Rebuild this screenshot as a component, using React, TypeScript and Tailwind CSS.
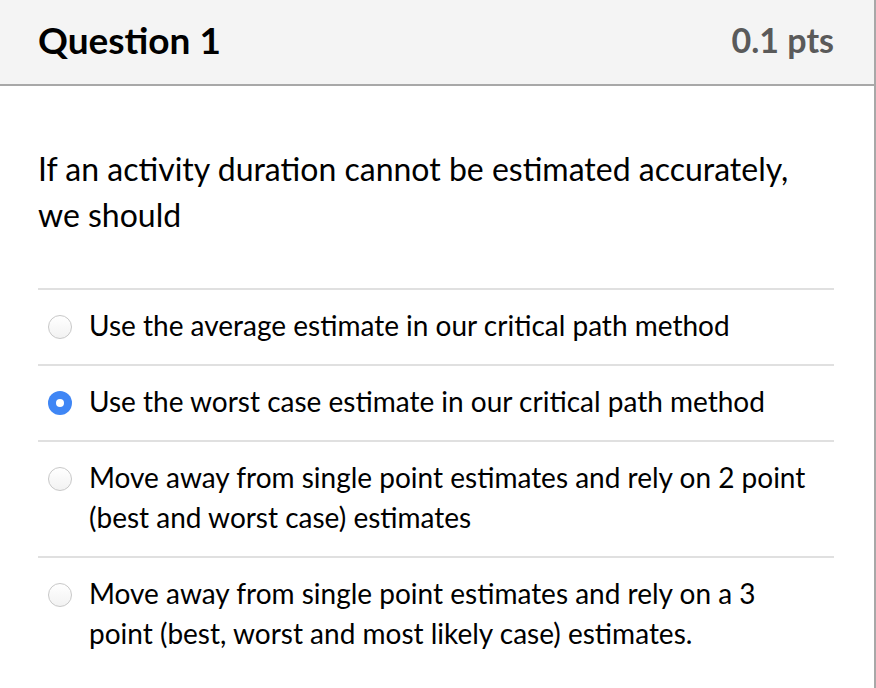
const answers = [
  { id: "a", text: "Use the average estimate in our critical path method", checked: false },
  { id: "b", text: "Use the worst case estimate in our critical path method", checked: true },
  {
    id: "c",
    text: "Move away from single point estimates and rely on 2 point (best and worst case) estimates",
    checked: false,
  },
  {
    id: "d",
    text: "Move away from single point estimates and rely on a 3 point (best, worst and most likely case) estimates.",
    checked: false,
  },
];

function Radio({ checked }: { checked: boolean }) {
  if (checked) {
    return (
      <span className="flex h-6 w-6 shrink-0 items-center justify-center rounded-full bg-[#3f86f5]">
        <span className="h-2 w-2 rounded-full bg-white" />
      </span>
    );
  }
  return (
    <span className="h-6 w-6 shrink-0 rounded-full border border-[#c8c8c8] bg-gradient-to-b from-white to-[#f2f2f2]" />
  );
}

export default function App() {
  return (
    <main
      className="min-h-[688px] w-[876px] bg-white border-r-2 border-[#a8a8a8] text-black"
      style={{ fontFamily: "Lato, 'Open Sans', sans-serif" }}
    >
      <header className="flex h-[86px] items-center justify-between border-b-2 border-[#a8a8a8] bg-[#f4f4f4] pb-[5px] pl-[38px] pr-[40px]">
        <h2 className="text-[37px] font-bold leading-none">Question 1</h2>
        <span className="text-[34px] font-bold leading-none text-[#5a5a5a]">0.1 pts</span>
      </header>

      <section className="pl-[38px] pr-[40px]">
        <p className="pt-[60px] pb-[50px] text-[32px] leading-[46px]">
          If an activity duration cannot be estimated accurately, we should
        </p>
        <div>
          {answers.map((a) => (
            <label
              key={a.id}
              className="flex items-start gap-[17px] border-t-2 border-[#e0e0e0] pt-[15px] pb-[19px] pl-[10px] text-[28px] leading-[40px]"
            >
              <span className="flex h-10 items-center pt-1">
                <Radio checked={a.checked} />
              </span>
              <span className="pr-5">{a.text}</span>
            </label>
          ))}
        </div>
      </section>
    </main>
  );
}
